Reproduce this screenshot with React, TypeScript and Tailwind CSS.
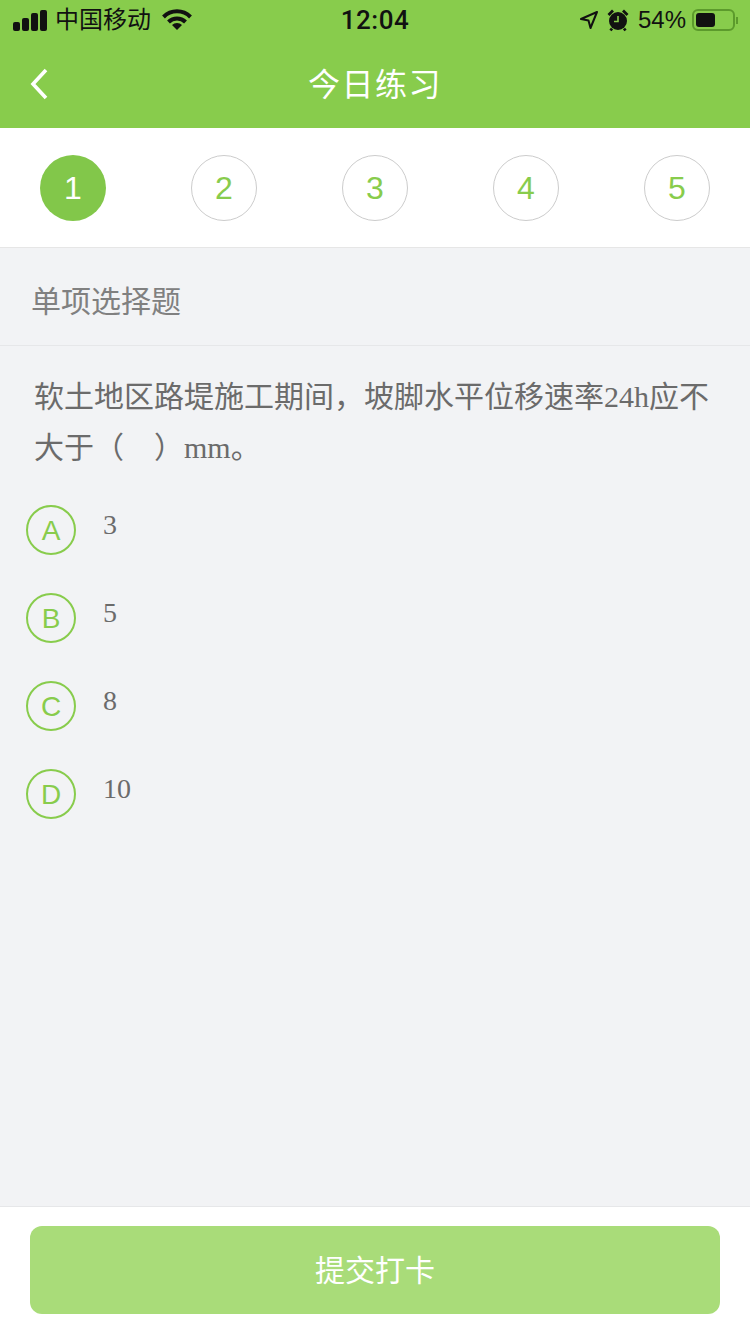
const sans = "font-['Liberation_Sans','Noto_Sans_CJK_SC',sans-serif]";
const steps = ["1", "2", "3", "4", "5"];
const options = [
  { key: "A", text: "3" },
  { key: "B", text: "5" },
  { key: "C", text: "8" },
  { key: "D", text: "10" },
];

function StatusBar() {
  return (
    <div className="h-10 flex items-center relative text-[#111] pl-[13px] pr-[12px]">
      <div className="flex items-end gap-[2px] h-[21px]">
        <span className="w-[7px] h-[9px] bg-[#111] rounded-[2px]"></span>
        <span className="w-[7px] h-[13px] bg-[#111] rounded-[2px]"></span>
        <span className="w-[7px] h-[18px] bg-[#111] rounded-[2px]"></span>
        <span className="w-[7px] h-[21px] bg-[#111] rounded-[2px]"></span>
      </div>
      <span className="text-[24px] leading-none ml-[8px]">中国移动</span>
      <svg width="30" height="22" viewBox="0 0 30 22" className="ml-[11px]">
        <path d="M1.5 8 A19 19 0 0 1 28.5 8" fill="none" stroke="#111" strokeWidth="4" />
        <path d="M6.5 13 A12 12 0 0 1 23.5 13" fill="none" stroke="#111" strokeWidth="4" />
        <path d="M10 16 A7 7 0 0 1 20 16 L15 21 Z" fill="#111" />
      </svg>
      <span className="absolute left-0 right-0 text-center text-[26px] font-medium font-['Roboto',sans-serif] tracking-[0.5px] leading-none">12:04</span>
      <div className="ml-auto flex items-center">
        <svg width="20" height="20" viewBox="0 0 20 20">
          <path d="M18 2 L2 9 L9.5 10.5 L11.5 18 Z" fill="none" stroke="#111" strokeWidth="2" strokeLinejoin="round" />
        </svg>
        <svg width="24" height="24" viewBox="0 0 24 24" className="ml-[7px]">
          <circle cx="12" cy="13" r="9" fill="#111" />
          <path d="M12 8 V13.5 H8" fill="none" stroke="#88cc4c" strokeWidth="1.6" />
          <path d="M2.5 7 L7 2.5 M21.5 7 L17 2.5 M6 20.5 L4.5 22.5 M18 20.5 L19.5 22.5" stroke="#111" strokeWidth="2.8" />
        </svg>
        <span className="text-[24px] leading-none ml-[8px]">54%</span>
        <div className="ml-[6px] w-[43px] h-[22px] rounded-[6px] border-2 border-[#5c9a2c] p-[2px] flex">
          <span className="w-[19px] h-full rounded-[3px] bg-[#111]"></span>
        </div>
        <span className="w-[2px] h-[7px] bg-[#5c9a2c] ml-[1px]"></span>
      </div>
    </div>
  );
}

export default function App() {
  return (
    <div className={`w-[750px] h-[1334px] flex flex-col bg-[#f2f3f5] ${sans}`}>
      <header className="h-32 bg-[#88cc4c] flex flex-col shrink-0">
        <StatusBar />
        <div className="flex-1 flex items-center justify-center relative pt-[1px]">
          <svg width="20" height="34" viewBox="0 0 20 34" className="absolute left-[29px] top-[27px]">
            <path d="M17 3 L4 17 L17 31" fill="none" stroke="#fff" strokeWidth="3.6" />
          </svg>
          <span className="text-white text-[32px] leading-none tracking-[1.5px]">今日练习</span>
        </div>
      </header>

      <div className="h-[120px] bg-white border-b border-[#e6e6e6] flex items-center justify-between pl-10 pr-10 shrink-0">
        {steps.map((s, i) => (
          <div
            key={s}
            className={
              i === 0
                ? "w-[66px] h-[66px] rounded-full bg-[#82c74a] text-white flex items-center justify-center text-[32px]"
                : "w-[66px] h-[66px] rounded-full border border-[#cccccc] text-[#88cc4c] flex items-center justify-center text-[32px]"
            }
          >
            {s}
          </div>
        ))}
      </div>

      <div className="h-[98px] border-b border-[#e6e7e9] flex items-center pl-[31px] pt-[10px] text-[30px] text-[#808080] shrink-0">
        单项选择题
      </div>

      <main className="flex-1 font-['Liberation_Serif','Noto_Sans_CJK_SC',serif]">
        <p className="mx-[34px] mt-[25px] text-[30px] leading-[51px] text-[#6b6b6b]">
          软土地区路堤施工期间，坡脚水平位移速率24h应不大于（&nbsp;&nbsp;&nbsp;&nbsp;）mm。
        </p>
        <ul className="mt-[32px] ml-[26px] flex flex-col gap-[38px]">
          {options.map((o) => (
            <li key={o.key} className="flex items-start h-[50px]">
              <span className={`w-[50px] h-[50px] rounded-full border-2 border-[#88cc4c] text-[#88cc4c] flex items-center justify-center pt-[2px] text-[28px] ${sans}`}>
                {o.key}
              </span>
              <span className="ml-[27px] text-[28px] leading-[40px] text-[#6b6b6b]">{o.text}</span>
            </li>
          ))}
        </ul>
      </main>

      <footer className="h-[128px] bg-white border-t border-[#e6e7e9] pt-[19px] px-[30px] shrink-0">
        <button className="w-full h-[88px] rounded-[12px] bg-[#a9dc79] text-white text-[30px]">
          提交打卡
        </button>
      </footer>
    </div>
  );
}
